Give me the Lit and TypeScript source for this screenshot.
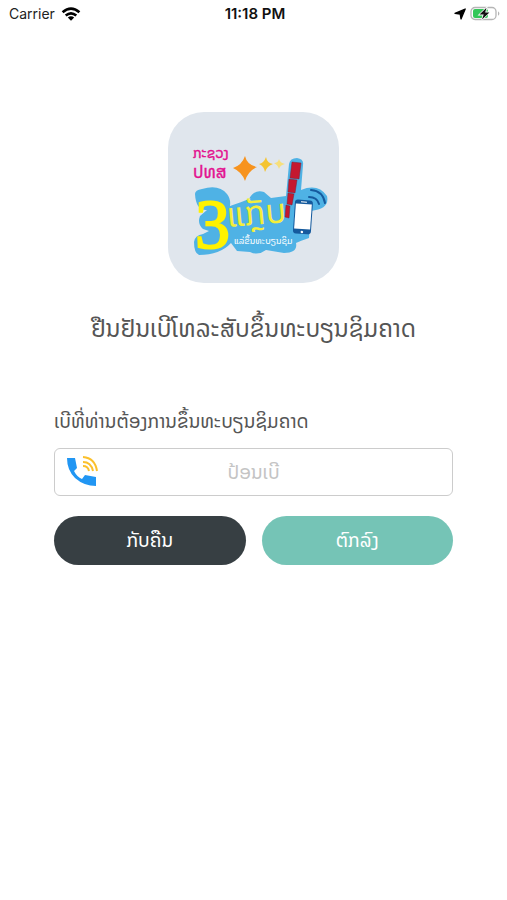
import { LitElement, html, css } from "lit";
import { customElement } from "lit/decorators.js";

@customElement("status-bar")
class StatusBar extends LitElement {
  static styles = css`
    :host {
      display: grid;
      grid-template-columns: 1fr auto 1fr;
      align-items: center;
      height: 28px;
      padding: 0 6px 0 9px;
      font: 14px/28px Inter, "Liberation Sans", sans-serif;
      color: #222;
    }
    .left, .right { display: flex; align-items: center; gap: 6px; }
    .right { justify-content: flex-end; gap: 4px; }
    .time { font-weight: 600; font-size: 15px; color: #111; }
    svg { display: block; }
  `;
  render() {
    return html`
      <div class="left">
        <span>Carrier</span>
        <svg width="20" height="14" viewBox="0 0 20 14" aria-label="Wi-Fi">
          <g fill="none" stroke="#000" stroke-width="2.6">
            <path d="M1.6 5.3Q10-2.2 18.4 5.3" />
            <path d="M4.7 8.6Q10 4 15.3 8.6" />
          </g>
          <path d="M6.8 10.6Q10 8 13.2 10.6L10 13.8Z" />
        </svg>
      </div>
      <span class="time">11:18 PM</span>
      <div class="right">
        <svg width="12" height="12" viewBox="0 0 12 12" aria-label="Location">
          <path d="M11.2 1 7 11 6.2 6 1 5.4Z" stroke="#000" stroke-width="1.3" stroke-linejoin="round" />
        </svg>
        <svg width="31" height="16" viewBox="0 0 31 16" aria-label="Battery charging">
          <rect x="1" y="1.5" width="25" height="12" rx="4" fill="#fff" stroke="#b5b5b5" stroke-width="1.3" />
          <rect x="3" y="3" width="15" height="9" rx="2" fill="#34c759" />
          <path d="M28 5.2Q30.8 7.5 28 9.8Z" fill="#b5b5b5" />
          <path d="M16.5 1.8 9.5 8.6h4.2L12 13.4l7.4-7h-4.2Z" fill="#111" stroke="#fff" stroke-width="1.6" paint-order="stroke" />
        </svg>
      </div>
    `;
  }
}

@customElement("app-logo")
class AppLogo extends LitElement {
  static styles = css`
    :host { display: block; width: 171px; }
    svg { display: block; width: 100%; }
    text { font-family: "Noto Sans Lao", "DejaVu Sans", sans-serif; }
    .ministry { fill: #e3118f; stroke: #e3118f; stroke-width: 0.4; }
    .three {
      font-family: "Liberation Serif", serif;
      font-size: 70px;
      fill: #fff200;
      stroke: #fff200;
      stroke-width: 2;
    }
    .clap { fill: #f4ee3a; font-size: 34px; }
    .caption { fill: #fff; font-size: 9px; }
  `;
  render() {
    return html`
      <svg viewBox="168 112 171 171" role="img" aria-label="ກະຊວງ ປທສ">
        <rect x="168" y="112" width="171" height="171" rx="36" fill="#e0e6ed" />
        <path fill="#4fb2e5" d="M195 194Q195 190 202 189Q219 184 227 194Q231 199 230 206Q242 202 249 199Q254 189 264 192L271 198L286 196L289 164Q290 158 297 158Q304 159 303 165L301 190Q318 183 327 196Q330 209 311 211L309 238Q300 241 296 243Q298 253 284 253L266 250Q258 256 250 252L237 251L231 243Q220 255 199 255Q194 253 194 242Q195 235 203 234L209 231L203 229Q197 224 200 216L207 210Q196 211 195 194Z" />
        <text class="ministry" x="193" y="158" font-size="14">ກະຊວງ</text>
        <text class="ministry" x="193" y="178" font-size="17">ປທສ</text>
        <path d="M245 156Q247 165 257 167Q248 171 245 181Q242 172 233 168Q242 165 245 156Z" fill="#f7931e" />
        <path d="M266 157Q267 163 273 164Q267 166 265 172Q264 166 259 164Q264 163 266 157Z" fill="#f4c430" />
        <path d="M279 159Q280 163 285 164Q280 165 279 169Q278 165 274 163Q278 163 279 159Z" fill="#f7df7b" />
        <text class="three" x="195" y="248">3</text>
        <text class="clap" x="228" y="227" transform="rotate(-5 228 227)">ແກຼັບ</text>
        <text class="caption" x="234" y="244">ແລ່ຂຶ້ນທະບຽນຊິມ</text>
        <g fill="#c4182f" stroke="#77233c" stroke-width="0.5">
          <path d="m292 162 9 1-2 16-9-1Z" />
          <path d="m289 179 8 1-2 13-7-1Z" />
          <path d="m288 193 6 1-2 11-5-1Z" />
          <path d="m286 205 4 1-1 12-4-1Z" />
        </g>
        <g transform="rotate(4 303 216)">
          <rect x="294" y="200" width="18" height="34" rx="3" fill="#155a9d" />
          <rect x="295" y="204" width="16" height="25" fill="#fff" />
          <circle cx="303" cy="232" r="1.3" fill="#fff" />
          <path d="M300 202h6" stroke="#fff" />
        </g>
        <g fill="none" stroke="#155a9d" stroke-width="2" stroke-linecap="round">
          <path d="M309 197Q317 197 319 204" />
          <path d="M311 190Q323 191 325 203" />
        </g>
      </svg>
    `;
  }
}

@customElement("app-root")
class AppRoot extends LitElement {
  static styles = css`
    :host {
      display: block;
      min-height: 100vh;
      background: #fff;
      font-family: "Noto Sans Lao", "DejaVu Sans", "Noto Sans", sans-serif;
      color: #555;
    }
    main { display: flex; flex-direction: column; align-items: center; padding: 84px 54px 40px; }
    h1 { margin: 28px 0 0; font-size: 24px; line-height: 36px; font-weight: 400; white-space: nowrap; }
    form { width: 100%; margin-top: 61px; }
    label { display: block; font-size: 19px; line-height: 28px; white-space: nowrap; }
    .field {
      display: grid;
      grid-template-columns: 32px 1fr 32px;
      align-items: center;
      height: 48px;
      margin-top: 12px;
      padding: 0 11px;
      box-sizing: border-box;
      border: 1px solid #ccc;
      border-radius: 6px;
    }
    input {
      min-width: 0;
      border: 0;
      outline: 0;
      padding: 0;
      height: 40px;
      background: none;
      font: inherit;
      font-size: 19px;
      text-align: center;
      color: #555;
    }
    input::placeholder { color: #c4c4c4; opacity: 1; }
    .actions { display: grid; grid-template-columns: 1fr 1fr; gap: 16px; margin-top: 20px; }
    button {
      height: 49px;
      padding: 0;
      border: 0;
      border-radius: 25px;
      font: inherit;
      font-size: 19px;
      color: #fff;
    }
    .back { background: #373f43; }
    .confirm { background: #75c4b6; }
  `;
  render() {
    return html`
      <status-bar></status-bar>
      <main>
        <app-logo></app-logo>
        <h1>ຢືນຢັນເບີໂທລະສັບຂຶ້ນທະບຽນຊິມຄາດ</h1>
        <form @submit=${(e: Event) => e.preventDefault()}>
          <label for="phone">ເບີທີ່ທ່ານຕ້ອງການຂຶ້ນທະບຽນຊິມຄາດ</label>
          <div class="field">
            <svg width="32" height="32" viewBox="0 0 32 32" aria-hidden="true">
              <path d="M1 2H9L11 12 8 15Q11 21 16 23L19 19 30 21V30Q18 30 9 22 1 14 1 2Z" fill="#2196f3" />
              <g fill="none" stroke="#fbc02d" stroke-width="2">
                <path d="M17 1Q29 2 31 15" />
                <path d="M17 6Q25 6 27 15" />
                <path d="M17 10Q22 10 23 15" />
              </g>
            </svg>
            <input id="phone" type="tel" placeholder="ປ້ອນເບີ" />
          </div>
          <div class="actions">
            <button class="back" type="button">ກັບຄືນ</button>
            <button class="confirm" type="submit">ຕົກລົງ</button>
          </div>
        </form>
      </main>
    `;
  }
}
